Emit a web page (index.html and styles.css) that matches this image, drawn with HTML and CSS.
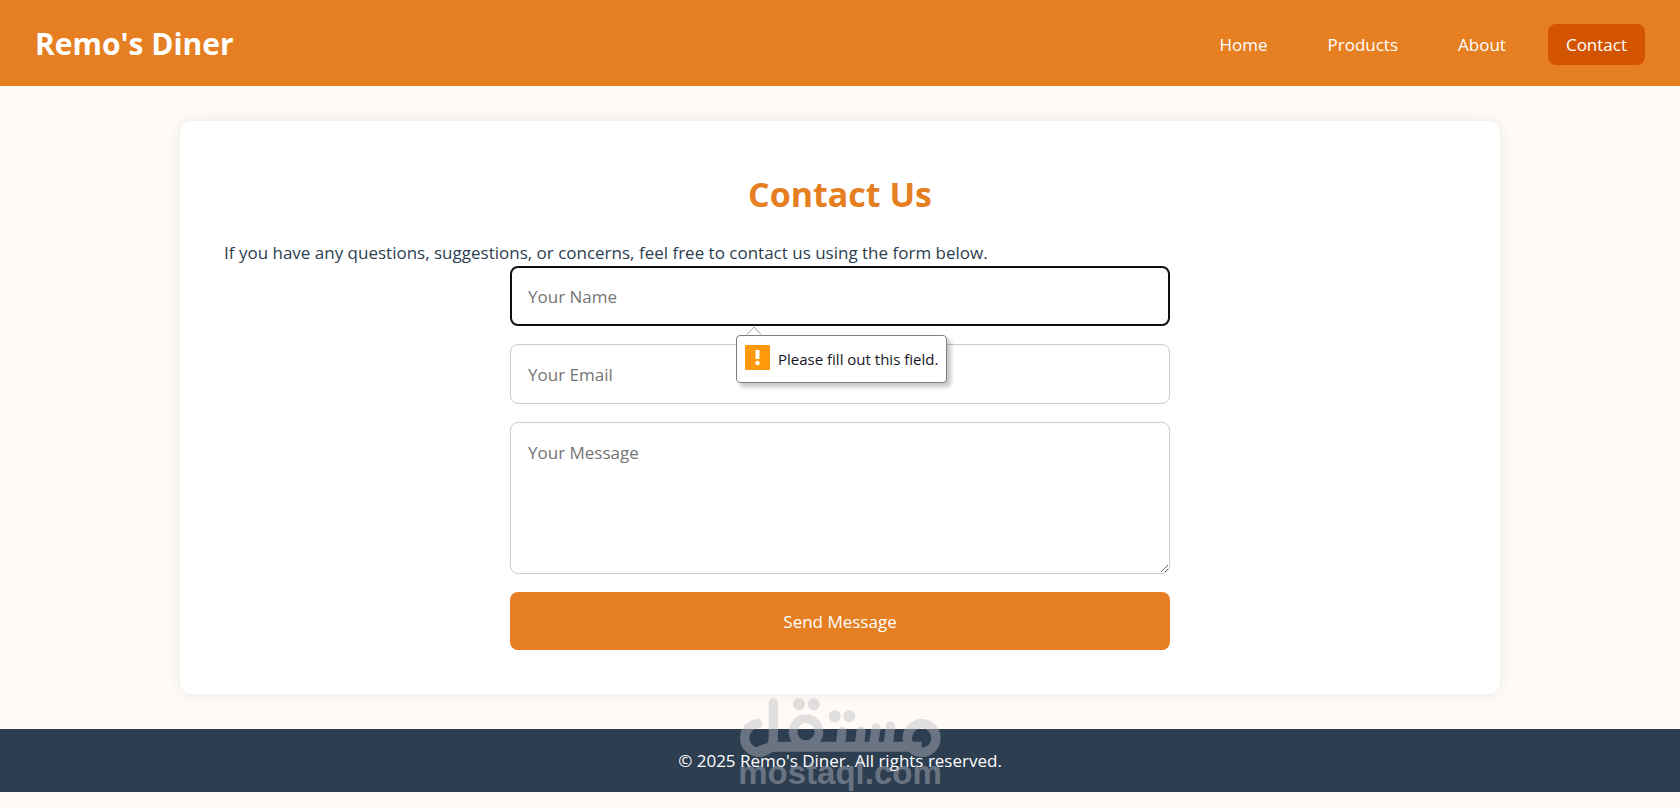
FILE: index.html
```html
<!DOCTYPE html>
<html lang="en">
<head>
<meta charset="utf-8">
<meta name="viewport" content="width=device-width, initial-scale=1">
<title>Contact - Remo's Diner</title>
<link rel="stylesheet" href="styles.css">
</head>
<body>
<header class="site-header">
  <h1 class="brand">Remo's Diner</h1>
  <nav class="site-nav" aria-label="Main">
    <a class="nav-link" href="#home">Home</a>
    <a class="nav-link" href="#products">Products</a>
    <a class="nav-link" href="#about">About</a>
    <a class="nav-link nav-link-active" href="#contact" aria-current="page">Contact</a>
  </nav>
</header>
<main class="card">
  <h2 class="card-title">Contact Us</h2>
  <p class="intro">If you have any questions, suggestions, or concerns, feel free to contact us using the form below.</p>
  <form class="contact-form">
    <div class="field">
      <input class="control control-focused" type="text" placeholder="Your Name" aria-label="Your Name" aria-describedby="name-hint" required>
      <div class="hint" id="name-hint" role="alert">
        <svg class="hint-arrow" viewBox="0 0 16 10" aria-hidden="true"><path d="M1 8.500L8 1l7 7.500" fill="#fff" stroke="#a0a0a4"/></svg>
        <svg class="hint-icon" viewBox="0 0 25 25" aria-hidden="true"><rect width="25" height="25" rx="1" fill="#ff9a0c"/><path d="M10.500 5h4v9h-4z" fill="#fff"/><circle cx="12.500" cy="18" r="2.200" fill="#fff"/></svg>
        <span>Please fill out this field.</span>
      </div>
    </div>
    <input class="control" type="email" placeholder="Your Email" aria-label="Your Email" required>
    <textarea class="control control-message" placeholder="Your Message" aria-label="Your Message" required></textarea>
    <button class="submit" type="submit">Send Message</button>
  </form>
</main>
<footer class="site-footer">
  <p class="copyright">© 2025 Remo's Diner. All rights reserved.</p>
  <svg class="watermark" viewBox="234 51 612 288" role="img" aria-label="mostaql.com">
    <g class="watermark-mark">
      <path d="M293 134A43 43 0 1 0 340 178V72" stroke-width="28" stroke-linecap="round"/>
      <path d="M295 219Q325 203 354 203H785" stroke-width="30"/>
      <circle cx="438" cy="158" r="39" stroke-width="26"/>
      <circle cx="785" cy="177" r="43" stroke-width="28"/>
      <path d="M546 157L541 200M603 157L598 200M648 147L640 200M692 141L684 200" stroke-width="28" stroke-linecap="round"/>
    </g>
    <g class="watermark-fill">
      <circle cx="417" cy="76" r="18"/><circle cx="461" cy="76" r="18"/>
      <circle cx="524" cy="112" r="18"/><circle cx="568" cy="112" r="18"/>
      <text class="watermark-text" x="540" y="315" text-anchor="middle">mostaql.com</text>
    </g>
  </svg>
</footer>
</body>
</html>
```
FILE: styles.css
```css
* {
  box-sizing: border-box;
  margin: 0;
  padding: 0;
}

body {
  background: #fefaf5;
  color: #2c3e50;
  font-family: "Segoe UI", "Open Sans", "Noto Sans", sans-serif;
  font-size: 17px;
  line-height: 27px;
}

.site-header {
  display: flex;
  justify-content: space-between;
  align-items: center;
  flex-wrap: wrap;
  padding: 22px 35px 20px;
  background: #e67e22;
  color: #fff;
}

.brand {
  font-size: 30px;
  line-height: 44px;
}

.site-nav {
  display: flex;
  flex-wrap: wrap;
  gap: 24px;
}

.nav-link {
  padding: 7px 18px;
  border-radius: 8px;
  color: #fff;
  text-decoration: none;
}

.nav-link-active {
  background: #d35400;
}

.card {
  width: calc(100% - 48px);
  max-width: 1320px;
  margin: 35px auto;
  padding: 44px;
  border-radius: 12px;
  background: #fff;
  box-shadow: 0 0 16px rgba(0, 0, 0, 0.07);
}

.card-title {
  margin-bottom: 16px;
  color: #e67e22;
  font-size: 34px;
  line-height: 58px;
  text-align: center;
}

.contact-form {
  display: flex;
  flex-direction: column;
  gap: 18px;
  max-width: 660px;
  margin: 0 auto;
}

.field {
  position: relative;
}

.control {
  display: block;
  width: 100%;
  height: 60px;
  padding: 16px 17px;
  border: 1px solid #ccc;
  border-radius: 8px;
  background: #fff;
  color: #2c3e50;
  font: inherit;
}

.control::placeholder {
  color: #757575;
}

.control-focused {
  padding: 15px 16px;
  border: 2px solid #101010;
}

.control-message {
  height: 152px;
  resize: vertical;
}

.submit {
  height: 58px;
  border: 0;
  border-radius: 8px;
  background: #e67e22;
  color: #fff;
  font: inherit;
  cursor: pointer;
}

.hint {
  position: absolute;
  z-index: 1;
  top: 100%;
  left: calc(50% - 104px);
  display: flex;
  gap: 8px;
  height: 48px;
  margin-top: 9px;
  padding: 9px 8px;
  border: 1px solid #7d7d87;
  border-radius: 4px;
  background: #fff;
  box-shadow: 4px 4px 4px rgba(0, 0, 0, 0.22);
  color: #15151f;
  font-size: 15px;
  line-height: 28px;
  white-space: nowrap;
}

.hint-arrow {
  position: absolute;
  bottom: 100%;
  left: 9px;
  width: 16px;
  height: 10px;
}

.hint-icon {
  width: 25px;
  height: 25px;
}

.site-footer {
  position: relative;
  padding: 18px;
  background: #2c3e50;
  color: #fff;
  text-align: center;
}

.watermark {
  position: absolute;
  bottom: 0;
  left: 50%;
  width: 204px;
  height: 96px;
  margin-left: -102px;
  overflow: visible;
  opacity: 0.43;
  pointer-events: none;
}

.watermark-mark {
  fill: none;
  stroke: #bcbac3;
}

.watermark-fill {
  fill: #bcbac3;
}

.watermark-text {
  font-family: "Liberation Sans", Arial, sans-serif;
  font-size: 99px;
  font-weight: 700;
}
```
